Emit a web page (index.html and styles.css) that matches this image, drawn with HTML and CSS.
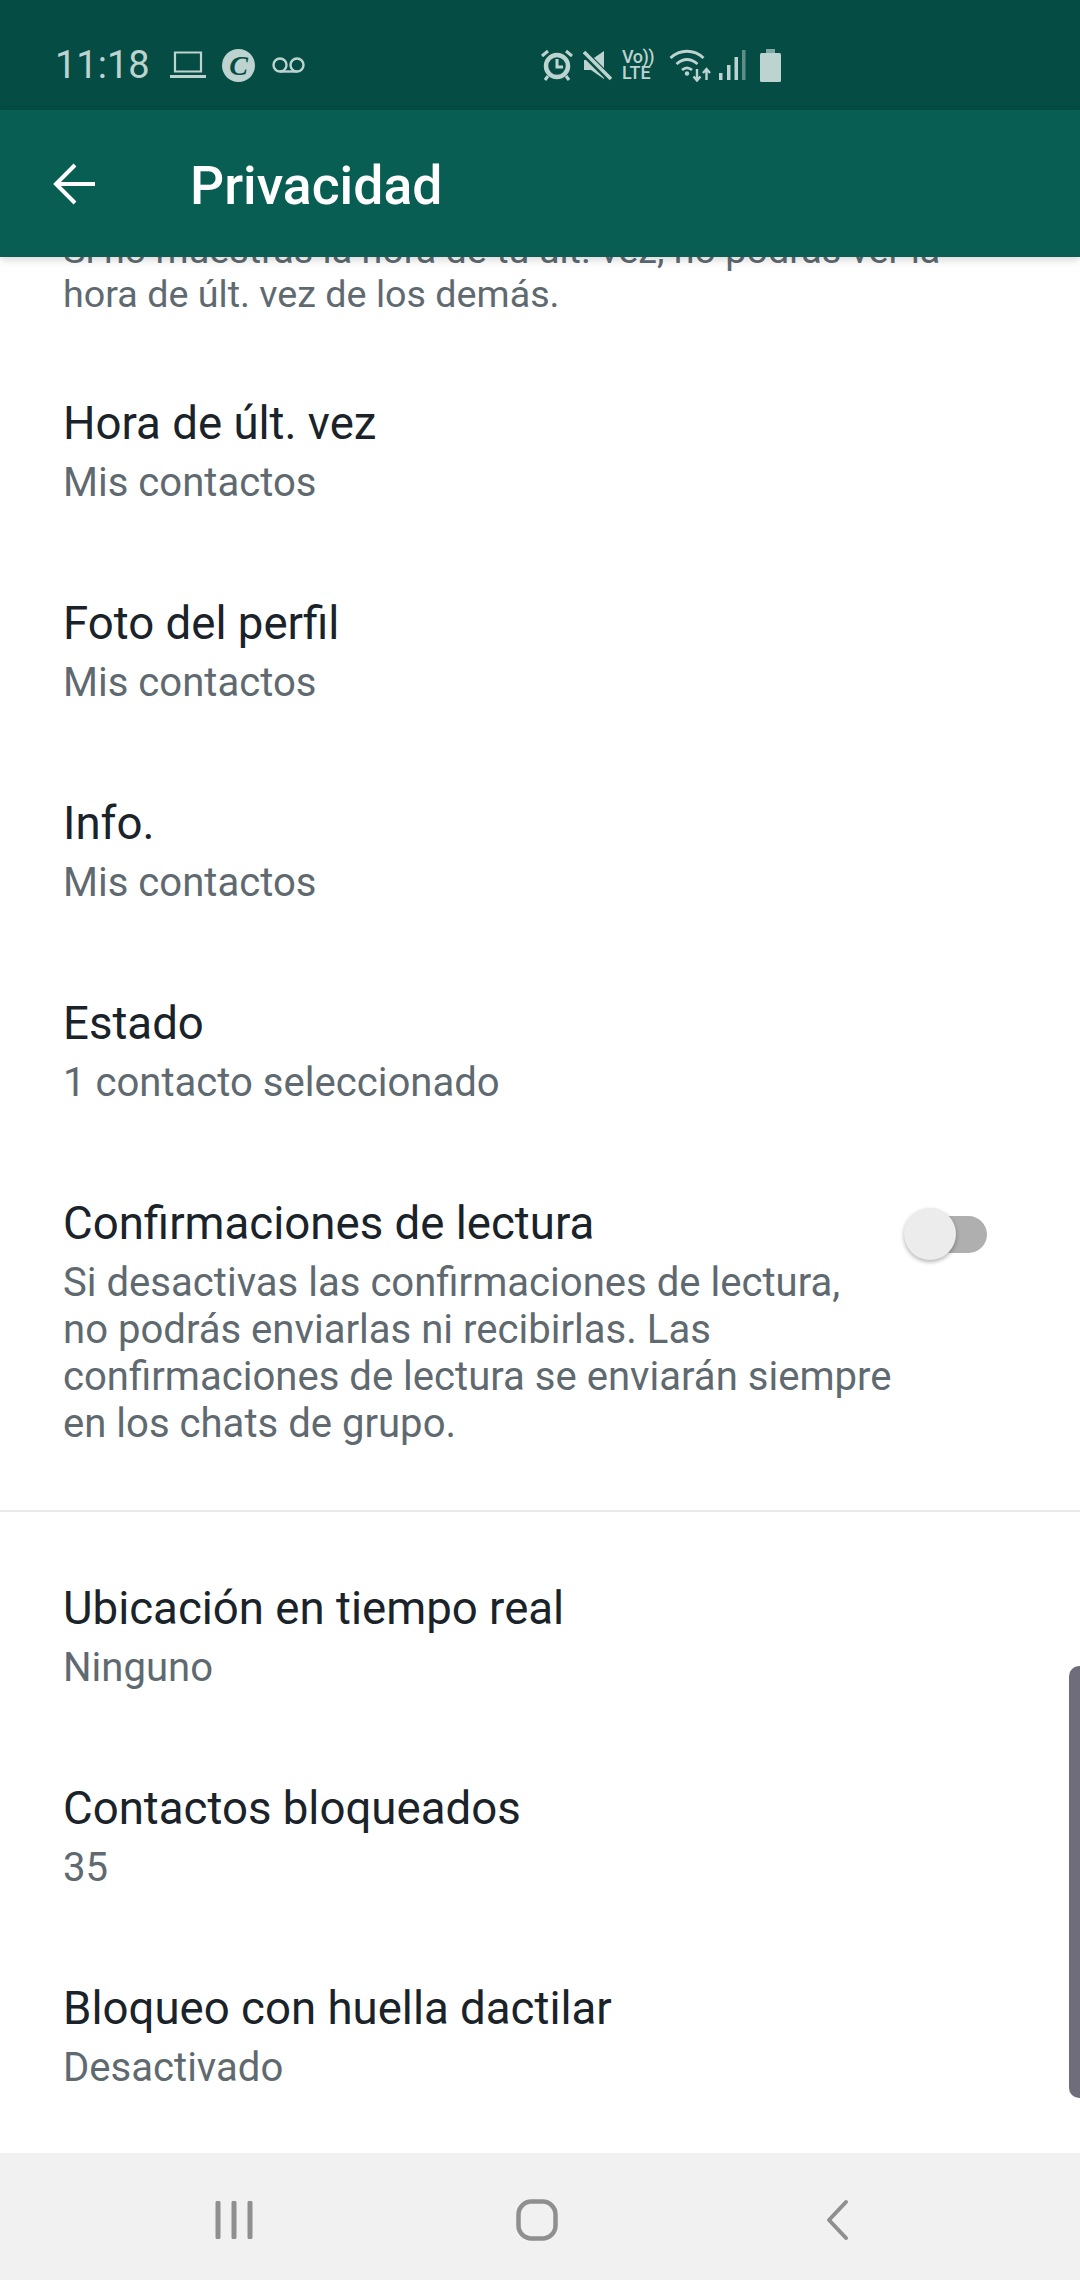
FILE: index.html
```html
<!DOCTYPE html>
<html lang="es">
<head>
    <meta charset="UTF-8">
    <meta name="viewport" content="width=device-width, initial-scale=1.0">
    <title>Privacidad</title>
    <link rel="stylesheet" href="styles.css">
</head>
<body>
<div class="phone">
    <div class="status-bar">
        <div class="status-left">
            <span class="clock">11:18</span>
            <svg class="ic-laptop" width="38" height="28" viewBox="0 0 38 28">
                <path d="M6 1.500h26v19H6z" fill="none" stroke="#bdd3cf" stroke-width="2.200"/>
                <path d="M1 25.500h36" stroke="#bdd3cf" stroke-width="3"/>
            </svg>
            <span class="c-badge">C</span>
            <svg class="ic-voicemail" width="33" height="16" viewBox="0 0 33 16">
                <circle cx="8" cy="8" r="6.500" fill="none" stroke="#bdd3cf" stroke-width="2.400"/>
                <circle cx="25" cy="8" r="6.500" fill="none" stroke="#bdd3cf" stroke-width="2.400"/>
                <path d="M8 14.500h17" stroke="#bdd3cf" stroke-width="2.400"/>
            </svg>
        </div>
        <div class="status-right">
            <svg class="ic-alarm" width="32" height="32" viewBox="0 0 32 32">
                <circle cx="16" cy="17" r="11" fill="none" stroke="#bdd3cf" stroke-width="4.500"/>
                <path d="M16 10v8h6" fill="none" stroke="#bdd3cf" stroke-width="3"/>
                <path d="M1 7l6-5M31 7l-6-5M7 27l-3 4M25 27l3 4" stroke="#bdd3cf" stroke-width="3"/>
            </svg>
            <svg class="ic-mute" width="29" height="31" viewBox="0 0 29 31">
                <path d="M1 10h7L21 1v28L8 20H1z" fill="#bdd3cf"/>
                <path d="M1 3l27 27" stroke="#054d44" stroke-width="7"/>
                <path d="M1 2l27 27" stroke="#bdd3cf" stroke-width="3.500"/>
            </svg>
            <span class="volte"><span class="vo">Vo))</span><span>LTE</span></span>
            <svg class="ic-wifi" width="42" height="33" viewBox="0 0 42 33">
                <path d="M1.500 9C11 0 25 0 34.500 9M7.500 15c7-6 14-6 21 0M13 21c3.500-3 6.500-3 10 0" fill="none" stroke="#bdd3cf" stroke-width="2.800"/>
                <circle cx="18" cy="24.500" r="2.200" fill="#bdd3cf"/>
                <path d="M28 20v11M24.500 27.500l3.500 4 3.500-4M37.500 31V20M34 24l3.500-4 3.500 4" fill="none" stroke="#bdd3cf" stroke-width="2.400"/>
            </svg>
            <svg class="ic-signal" width="27" height="30" viewBox="0 0 27 30">
                <rect x="0" y="23" width="3.500" height="7" fill="#bdd3cf"/>
                <rect x="8" y="15" width="3.500" height="15" fill="#bdd3cf"/>
                <rect x="15.500" y="7" width="3.500" height="23" fill="#bdd3cf"/>
                <rect x="23" y="0" width="3.500" height="30" fill="#5d8f87"/>
            </svg>
            <svg class="ic-battery" width="21" height="33" viewBox="0 0 21 33">
                <path d="M6 0h9v4H6z" fill="#7fa9a2"/>
                <path d="M1.500 4h18Q21 4 21 5.500V31.500Q21 33 19.500 33h-18Q0 33 0 31.500V5.500Q0 4 1.500 4z" fill="#bdd3cf"/>
            </svg>
        </div>
    </div>

    <header class="toolbar">
        <svg class="back" width="42" height="42" viewBox="0 0 42 42">
            <path d="M42 21H4M22 2L3 21l19 19" fill="none" stroke="#ffffff" stroke-width="4"/>
        </svg>
        <h1>Privacidad</h1>
    </header>

    <main class="list">
        <p class="note">Si no muestras la hora de tu últ. vez, no podrás ver la hora de últ. vez de los demás.</p>

        <section class="group">
            <div class="row">
                <div class="row-title">Hora de últ. vez</div>
                <div class="row-sub">Mis contactos</div>
            </div>
            <div class="row">
                <div class="row-title">Foto del perfil</div>
                <div class="row-sub">Mis contactos</div>
            </div>
            <div class="row">
                <div class="row-title">Info.</div>
                <div class="row-sub">Mis contactos</div>
            </div>
            <div class="row">
                <div class="row-title">Estado</div>
                <div class="row-sub">1 contacto seleccionado</div>
            </div>
            <div class="row row-switch">
                <div class="row-text">
                    <div class="row-title">Confirmaciones de lectura</div>
                    <div class="row-sub">Si desactivas las confirmaciones de lectura, no podrás enviarlas ni recibirlas. Las confirmaciones de lectura se enviarán siempre en los chats de grupo.</div>
                </div>
                <div class="switch"><span class="knob"></span></div>
            </div>
        </section>

        <section class="group group-last">
            <div class="row">
                <div class="row-title">Ubicación en tiempo real</div>
                <div class="row-sub">Ninguno</div>
            </div>
            <div class="row">
                <div class="row-title">Contactos bloqueados</div>
                <div class="row-sub">35</div>
            </div>
            <div class="row">
                <div class="row-title">Bloqueo con huella dactilar</div>
                <div class="row-sub">Desactivado</div>
            </div>
        </section>

        <div class="scroll-handle"></div>
    </main>

    <nav class="nav-bar">
        <svg class="nav-recent" width="40" height="38" viewBox="0 0 40 38">
            <path d="M4 2v34M20 2v34M36 2v34" stroke="#8f8f8f" stroke-width="5" stroke-linecap="round"/>
        </svg>
        <svg class="nav-home" width="42" height="42" viewBox="0 0 42 42">
            <rect x="2.500" y="2.500" width="37" height="37" rx="13" fill="none" stroke="#8f8f8f" stroke-width="4.500"/>
        </svg>
        <svg class="nav-back" width="26" height="42" viewBox="0 0 26 42">
            <path d="M22 3L5 21l17 18" fill="none" stroke="#8f8f8f" stroke-width="4" stroke-linecap="round" stroke-linejoin="round"/>
        </svg>
    </nav>
</div>
</body>
</html>
```

FILE: styles.css
```css
* {
    box-sizing: border-box;
}
body {
    margin: 0;
    font-family: Roboto, "Noto Sans", sans-serif;
    background-color: #ffffff;
}
.phone {
    width: 1080px;
    height: 2280px;
    display: flex;
    flex-direction: column;
    overflow: hidden;
}
.status-bar {
    height: 110px;
    background-color: #054d44;
    display: flex;
    align-items: center;
    padding: 20px 0 0 55px;
    color: #bdd3cf;
}
.status-left {
    display: flex;
    align-items: center;
    width: 486px;
}
.clock {
    font-size: 38px;
    width: 114px;
}
.ic-laptop {
    margin-right: 15px;
}
.c-badge {
    width: 33px;
    height: 33px;
    border-radius: 50%;
    background-color: #bdd3cf;
    color: #054d44;
    font-family: "Liberation Serif", serif;
    font-style: italic;
    font-weight: bold;
    font-size: 28px;
    line-height: 33px;
    text-align: center;
    margin-right: 17px;
}
.status-right {
    display: flex;
    align-items: center;
}
.ic-mute {
    margin-left: 10px;
}
.volte {
    display: flex;
    flex-direction: column;
    width: 34px;
    margin-left: 10px;
    font-size: 18px;
    line-height: 16px;
    font-weight: 500;
}
.vo {
    letter-spacing: -0.5px;
}
.ic-wifi {
    margin-left: 13px;
}
.ic-signal {
    margin-left: 8px;
}
.ic-battery {
    margin-left: 14px;
}
.toolbar {
    height: 147px;
    background-color: #095e54;
    display: flex;
    align-items: center;
    padding-left: 53px;
    box-shadow: 0 3px 8px rgba(0, 0, 0, 0.16);
    position: relative;
    z-index: 2;
}
.toolbar h1 {
    margin: 3px 0 0 95px;
    font-size: 53.500px;
    font-weight: 500;
    color: #ffffff;
}
.list {
    flex: 1;
    overflow: hidden;
    position: relative;
}
.note {
    margin: -29px 0 0;
    padding: 0 120px 0 63px;
    font-size: 37.700px;
    line-height: 44px;
    color: #5f6a70;
}
.group {
    padding-top: 34px;
    border-bottom: 2px solid #e9e9e9;
}
.group-last {
    border-bottom: none;
    padding-top: 23px;
}
.row {
    padding: 44px 63px;
    min-height: 200px;
}
.row-title {
    font-size: 45.600px;
    line-height: 60px;
    color: #1a2329;
}
.row-sub {
    margin-top: 4.500px;
    font-size: 40.100px;
    line-height: 47px;
    color: #5f6a70;
}
.row-switch {
    display: flex;
    justify-content: space-between;
    padding-right: 0;
    padding-bottom: 63.500px;
}
.row-text {
    width: 830px;
}
.switch {
    position: relative;
    width: 59px;
    height: 37px;
    margin: 22px 93px 0 0;
    border-radius: 19px;
    background-color: #afafaf;
}
.knob {
    position: absolute;
    left: -24px;
    top: -8px;
    width: 52px;
    height: 52px;
    border-radius: 50%;
    background-color: #ececec;
    box-shadow: 0 2px 4px rgba(0, 0, 0, 0.3);
}
.scroll-handle {
    position: absolute;
    right: 0;
    top: 1409px;
    width: 11px;
    height: 432px;
    background-color: #6f6d7b;
    border-radius: 10px 0 0 10px;
}
.nav-bar {
    height: 127px;
    background-color: #f1f1f1;
    display: flex;
    align-items: center;
    padding: 7px 0 0 214px;
}
.nav-home {
    margin-left: 262px;
}
.nav-back {
    margin-left: 266px;
}
```
